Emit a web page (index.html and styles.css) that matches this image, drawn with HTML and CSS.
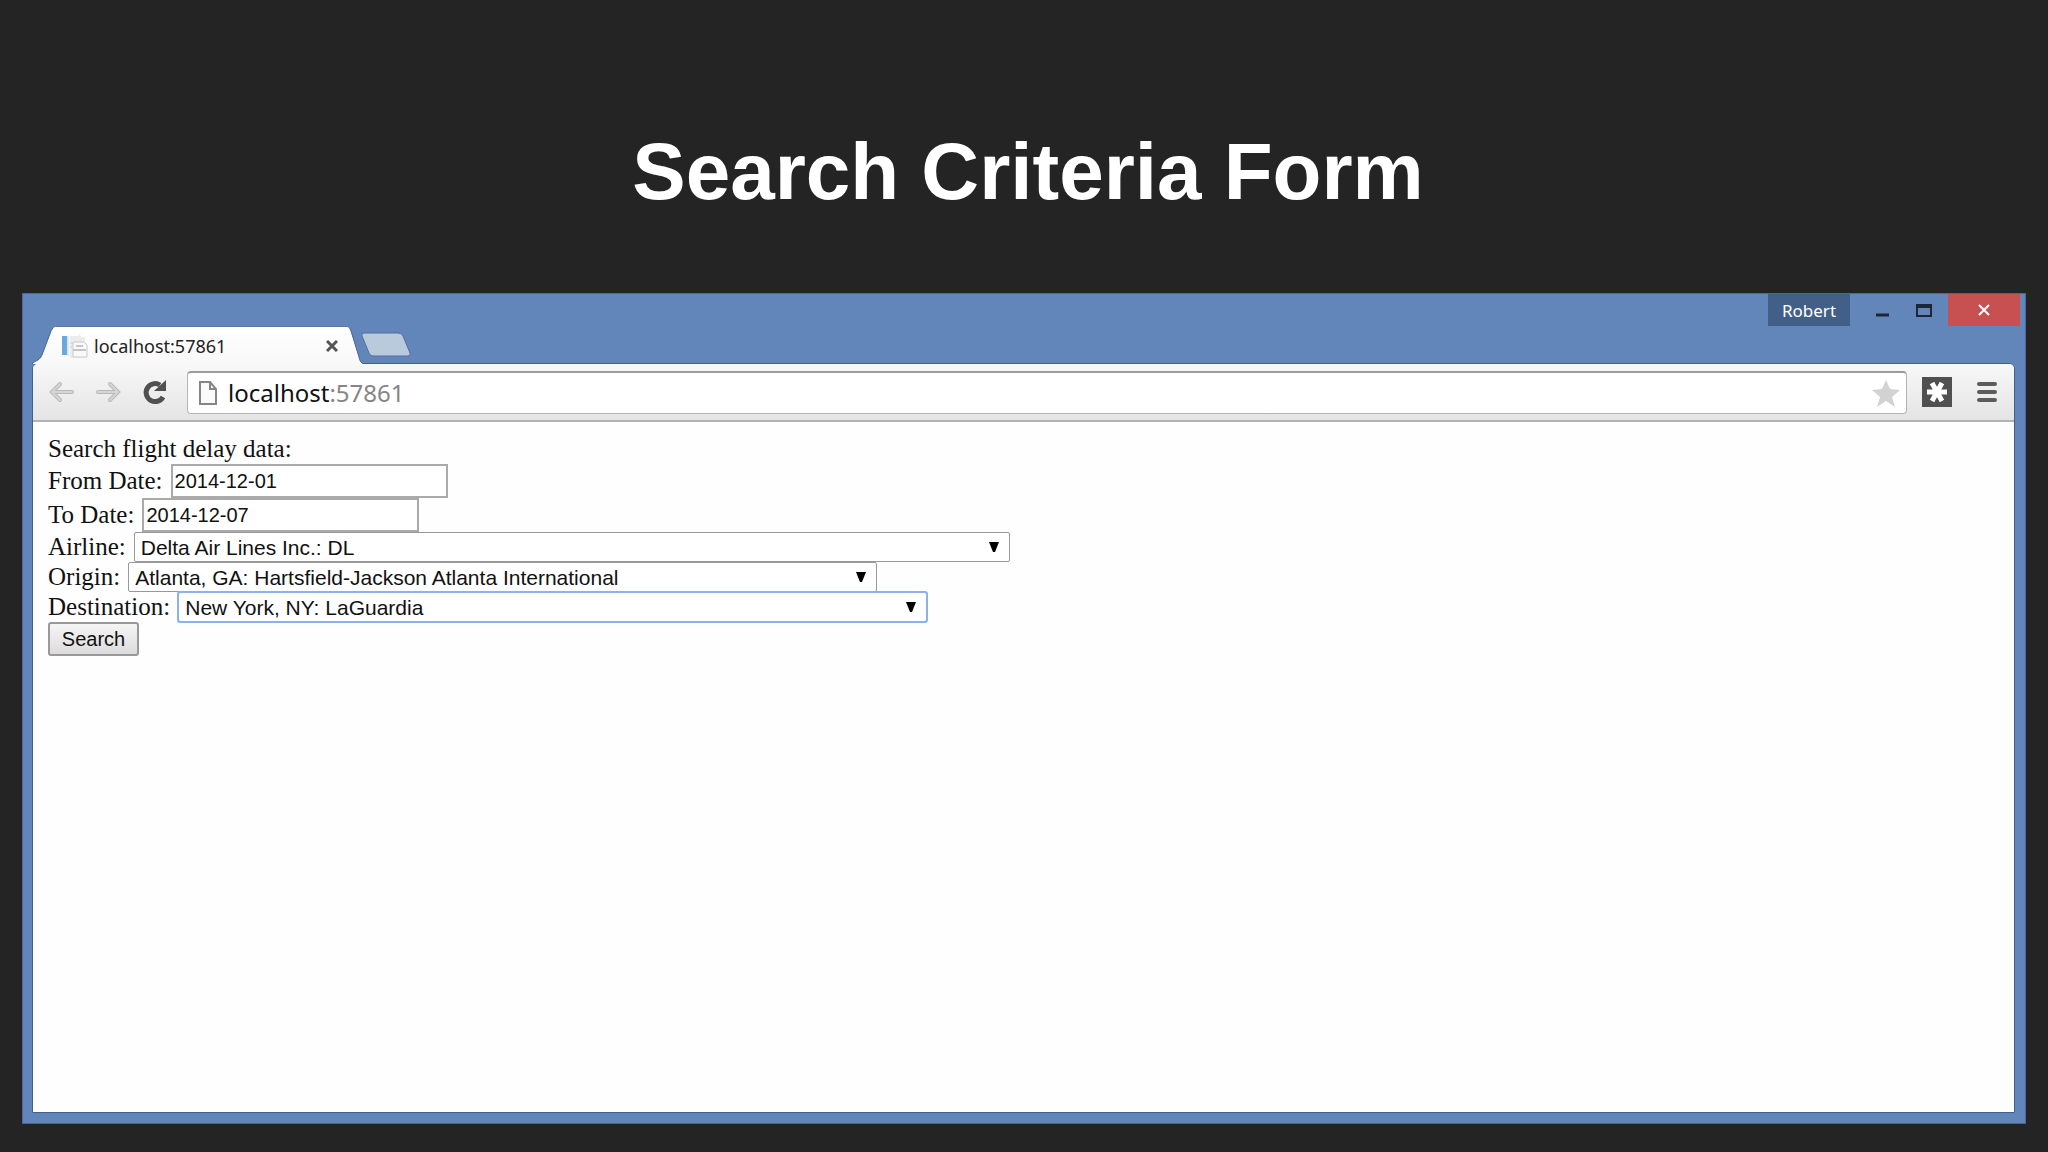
FILE: index.html
```html
<!DOCTYPE html>
<html lang="en">
<head>
    <meta charset="UTF-8">
    <meta name="viewport" content="width=device-width, initial-scale=1.0">
    <title>Search Criteria Form</title>
    <link rel="stylesheet" href="styles.css">
</head>
<body>
    <h1 class="slide-title">Search Criteria Form</h1>

    <div class="window">
        <header class="titlebar">
            <div class="tabs">
                <svg class="tab-left" width="24" height="38" viewBox="0 0 24 38" aria-hidden="true">
                    <path d="M0 38 Q1 36 6 34 Q9 32 10 29 L19 5 Q21 0 24 0 V38 Z" fill="url(#tabfill)"/>
                    <path d="M0 38 Q1 36 6 34 Q9 32 10 29 L19 5 Q21 0 24 0" fill="none" stroke="#45648f"/>
                    <defs>
                        <linearGradient id="tabfill" x1="0" y1="0" x2="0" y2="1">
                            <stop offset="0" stop-color="#ffffff"/>
                            <stop offset="1" stop-color="#f8f8f8"/>
                        </linearGradient>
                    </defs>
                </svg>
                <div class="tab">
                    <svg width="28" height="26" viewBox="0 0 28 26" aria-hidden="true">
                        <rect x="1" y="3" width="5" height="19" fill="#6aa9dc"/>
                        <path d="M6 3h2v20H6z" fill="#dbe6ee"/>
                        <path d="M9 3h8l2-2 1 3h4v21H9z" fill="#ececec"/>
                        <path d="M9 10h4M9 14h2" stroke="#d2d2d2"/>
                        <path d="M13 9h10l3 3v12H12V10z" fill="#f9f9f9" stroke="#c9c9c9"/>
                        <path d="M15 13h7M12 17h13" stroke="#c4c4c4" stroke-width="2"/>
                    </svg>
                    <span class="tab-title">localhost:57861</span>
                    <button class="tab-close" type="button" aria-label="Close tab">
                        <svg width="12" height="12" viewBox="0 0 12 12">
                            <path d="M1 1l10 10M11 1L1 11" stroke="#555" stroke-width="3"/>
                        </svg>
                    </button>
                </div>
                <svg class="tab-right" width="17" height="38" viewBox="0 0 17 38" aria-hidden="true">
                    <path d="M0 0 Q3 1 4 5 L12 31 Q13 37 17 38 H0 Z" fill="url(#tabfill)"/>
                    <path d="M0 0 Q3 1 4 5 L12 31 Q13 37 17 38" fill="none" stroke="#45648f"/>
                </svg>
                <button class="new-tab" type="button" aria-label="New tab">
                    <svg width="50" height="26" viewBox="0 0 50 26">
                        <path d="M3 1H37Q41 1 42 4L49 21Q50 24 47 24H12Q9 24 8 21L1 4Q0 1 3 1Z" fill="#b9cadc" stroke="#4f6f9f"/>
                    </svg>
                </button>
            </div>
            <div class="controls">
                <button class="user" type="button">Robert</button>
                <button class="control" type="button" aria-label="Minimize">
                    <svg width="18" height="18" viewBox="0 0 18 18"><path d="M3 14h13" stroke="#1c2636" stroke-width="3"/></svg>
                </button>
                <button class="control" type="button" aria-label="Maximize">
                    <svg width="18" height="18" viewBox="0 0 18 18"><path d="M2 4v11h14V4" fill="none" stroke="#1c2636" stroke-width="2"/><path d="M1 5h16" stroke="#1c2636" stroke-width="4"/></svg>
                </button>
                <button class="control close" type="button" aria-label="Close">
                    <svg width="14" height="14" viewBox="0 0 14 14"><path d="M2 2l10 10M12 2L2 12" stroke="#fff" stroke-width="2"/></svg>
                </button>
            </div>
        </header>

        <div class="client">
            <nav class="toolbar">
                <button class="tool" type="button" aria-label="Back">
                    <svg width="26" height="22" viewBox="0 0 26 22"><path d="M11 3L3 11l8 8M4 11h19" fill="none" stroke="#b9b9b9" stroke-width="4" stroke-linecap="round"/><path d="M11 3L3 11l8 8M4 11h19" fill="none" stroke="#d5d5d5" stroke-width="2" stroke-linecap="round"/></svg>
                </button>
                <button class="tool" type="button" aria-label="Forward">
                    <svg width="26" height="22" viewBox="0 0 26 22"><path d="M15 3l8 8-8 8M22 11H3" fill="none" stroke="#b9b9b9" stroke-width="4" stroke-linecap="round"/><path d="M15 3l8 8-8 8M22 11H3" fill="none" stroke="#d5d5d5" stroke-width="2" stroke-linecap="round"/></svg>
                </button>
                <button class="tool" type="button" aria-label="Reload">
                    <svg width="26" height="26" viewBox="0 0 26 26"><path d="M19 6A9 9 0 1 0 22 18" fill="none" stroke="#505050" stroke-width="5"/><path d="M25 1v11H13z" fill="#505050"/></svg>
                </button>
                <div class="omnibox">
                    <svg width="20" height="26" viewBox="0 0 20 26" aria-hidden="true">
                        <path d="M2 2h10l6 7v15H2z" fill="#fafafa" stroke="#858585" stroke-width="2"/>
                        <path d="M12 2v7h6" fill="none" stroke="#858585" stroke-width="2"/>
                    </svg>
                    <div class="address" contenteditable="true" role="textbox" aria-label="Address" spellcheck="false">localhost<span class="port">:57861</span></div>
                    <button type="button" aria-label="Bookmark this page">
                        <svg width="28" height="28" viewBox="0 0 28 28">
                            <path d="M14 1l4 9 10 1-8 7 3 10-9-6-9 6 3-10-8-7 10-1z" fill="#d2d2d2"/>
                        </svg>
                    </button>
                </div>
                <button class="tool extension" type="button" aria-label="Extension">
                    <svg width="30" height="30" viewBox="0 0 30 30"><rect width="30" height="30" fill="#505050"/><path d="M5 15h20M10 6l10 18M20 6L10 24" stroke="#fff" stroke-width="5"/></svg>
                </button>
                <button class="tool menu" type="button" aria-label="Menu">
                    <svg width="20" height="22" viewBox="0 0 20 22"><path d="M2 3h16M2 11h16M2 19h16" stroke="#5c5c5c" stroke-width="4" stroke-linecap="round"/></svg>
                </button>
            </nav>

            <main class="page">
                <form class="search-form">
                    <p class="row">Search flight delay data:</p>
                    <div class="row">
                        <label for="from-date">From Date:</label>
                        <input id="from-date" type="text" value="2014-12-01">
                    </div>
                    <div class="row">
                        <label for="to-date">To Date:</label>
                        <input id="to-date" type="text" value="2014-12-07">
                    </div>
                    <div class="row">
                        <label for="airline">Airline:</label>
                        <div class="select airline">
                            <select id="airline">
                                <option>Delta Air Lines Inc.: DL</option>
                            </select>
                            <svg width="10" height="10" viewBox="0 0 10 10" aria-hidden="true"><path d="M0 0h10L6 10H4z"/></svg>
                        </div>
                    </div>
                    <div class="row">
                        <label for="origin">Origin:</label>
                        <div class="select airport">
                            <select id="origin">
                                <option>Atlanta, GA: Hartsfield-Jackson Atlanta International</option>
                            </select>
                            <svg width="10" height="10" viewBox="0 0 10 10" aria-hidden="true"><path d="M0 0h10L6 10H4z"/></svg>
                        </div>
                    </div>
                    <div class="row">
                        <label for="destination">Destination:</label>
                        <div class="select airport active">
                            <select id="destination">
                                <option>New York, NY: LaGuardia</option>
                            </select>
                            <svg width="10" height="10" viewBox="0 0 10 10" aria-hidden="true"><path d="M0 0h10L6 10H4z"/></svg>
                        </div>
                    </div>
                    <button class="submit" type="button">Search</button>
                </form>
            </main>
        </div>
    </div>
</body>
</html>
```
FILE: styles.css
```css
* {
    margin: 0;
    padding: 0;
    box-sizing: border-box;
}

body {
    display: flex;
    flex-direction: column;
    min-height: 100vh;
    padding: 0 22px 28px;
    background-color: #242424;
    color: #111;
}

svg {
    display: block;
    flex: none;
}

button {
    border: none;
    background: none;
}

.slide-title {
    padding: 126px 0 75px 8px;
    color: #fff;
    font-family: "Liberation Sans", Arial, sans-serif;
    font-size: 80px;
    line-height: 92px;
    text-align: center;
}

/* Browser window */
.window {
    flex: 1;
    display: flex;
    flex-direction: column;
    padding: 0 10px 10px 9px;
    background-color: #6285ba;
    border: 1px solid #46689c;
}

.titlebar {
    display: flex;
    justify-content: space-between;
    align-items: flex-start;
    font-family: "Noto Sans", "Open Sans", sans-serif;
}

/* the active tab overlaps the client border by one pixel */
.tabs {
    position: relative;
    display: flex;
    align-items: flex-end;
    padding-top: 32px;
    margin-bottom: -1px;
}

.tab {
    display: flex;
    align-items: center;
    width: 291px;
    height: 38px;
    padding: 0 9px 0 5px;
    gap: 5px;
    background: linear-gradient(#fff, #f8f8f8);
    border-top: 1px solid #5777a8;
}

.tab-title {
    flex: 1;
    font-size: 18px;
    line-height: 26px;
    color: #222;
}

.new-tab {
    align-self: center;
    margin-left: -3px;
}

.controls {
    display: flex;
    height: 32px;
    margin-right: -5px;
}

.user {
    width: 82px;
    margin-right: 14px;
    background-color: #426087;
    color: #fff;
    font-family: inherit;
    font-size: 17px;
}

.control {
    display: flex;
    align-items: center;
    justify-content: center;
    width: 36px;
    margin-right: 6px;
}

.close {
    width: 72px;
    margin-right: 0;
    background-color: #c75050;
}

.client {
    flex: 1;
    display: flex;
    flex-direction: column;
    background-color: #fefefe;
    border: 1px solid #3f5f91;
    border-radius: 6px 6px 0 0;
    overflow: hidden;
}

/* Toolbar */
.toolbar {
    display: flex;
    align-items: center;
    gap: 20px;
    height: 58px;
    padding: 0 17px 0 16px;
    background: linear-gradient(#f8f8f8, #e4e4e4);
    border-bottom: 2px solid #b2b2b2;
}

.omnibox {
    flex: 1;
    display: flex;
    align-items: center;
    gap: 10px;
    height: 43px;
    padding: 0 6px 0 10px;
    background-color: #fff;
    border: 1px solid #b4b4b4;
    border-top: 2px solid #9c9c9c;
    border-radius: 4px;
}

.address {
    flex: 1;
    font-family: "Noto Sans", "Open Sans", sans-serif;
    font-size: 24px;
    line-height: 30px;
    outline: none;
}

.port {
    color: #858585;
}

.extension {
    margin-left: -5px;
}

.menu {
    margin-left: 5px;
}

/* Search form */
.page {
    flex: 1;
    padding: 12px 15px;
    font-family: "Liberation Serif", "Times New Roman", serif;
    font-size: 25px;
    line-height: 30px;
}

.row {
    display: flex;
    align-items: center;
    gap: 8px;
}

.row input {
    width: 277px;
    height: 34px;
    padding: 0 2px;
    border: 2px solid #aaa;
    background-color: #fff;
    color: #111;
    font-family: "Liberation Sans", Arial, sans-serif;
    font-size: 20px;
}

.select {
    display: grid;
    align-items: center;
    max-width: 100%;
}

.select select,
.select svg {
    grid-area: 1 / 1;
}

.select svg {
    justify-self: end;
    margin-right: 11px;
    pointer-events: none;
}

.select select {
    width: 100%;
    height: 30px;
    padding: 0 24px 0 6px;
    appearance: none;
    background-color: #fff;
    border: 1px solid #999;
    border-radius: 2px;
    color: #111;
    font-family: "Liberation Sans", Arial, sans-serif;
    font-size: 21px;
}

.airline {
    width: 876px;
}

.airport {
    width: 749px;
}

.select.active select {
    border-color: #6f95e0;
    outline: 2px solid #8fb0ee;
    outline-offset: -1px;
}

.submit {
    display: block;
    width: 91px;
    height: 34px;
    border: 2px solid #999;
    border-radius: 3px;
    background: linear-gradient(#f5f5f5, #dcdcdc);
    color: #111;
    font-family: "Liberation Sans", Arial, sans-serif;
    font-size: 20px;
}
```
